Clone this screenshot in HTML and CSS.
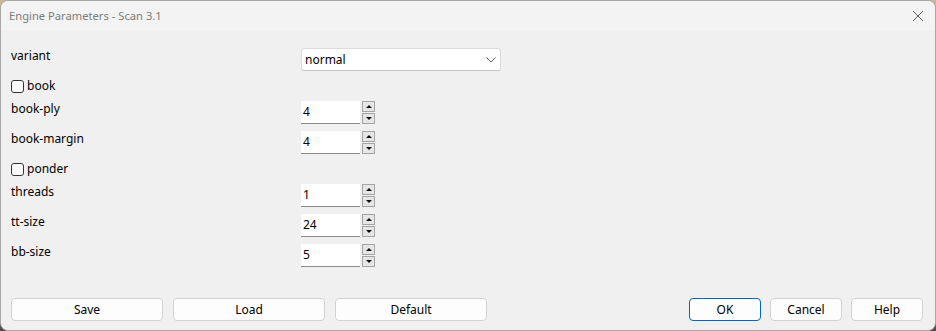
FILE: index.html
```html
<!DOCTYPE html>
<html>
<head>
<meta charset="utf-8">
<link rel="stylesheet" href="styles.css">
</head>
<body>
<div class="window">
  <div class="titlebar">
    <span class="title">Engine Parameters - Scan 3.1</span>
    <svg class="close" width="12" height="12" viewBox="0 0 12 12"><path d="M1 1 L11 11 M11 1 L1 11" stroke="#5a5a5a" stroke-width="1" fill="none"/></svg>
  </div>
  <div class="content">
    <div class="form">
      <div class="row">
        <span class="lbl">variant</span>
        <div class="select"><span>normal</span>
          <svg class="chev" width="10" height="6" viewBox="0 0 10 6"><path d="M0.5 0.5 L5 5 L9.5 0.5" stroke="#606060" stroke-width="1" fill="none"/></svg>
        </div>
      </div>
      <div class="row check"><span class="box"></span><span>book</span></div>
      <div class="row">
        <span class="lbl">book-ply</span>
        <div class="spin"><div class="field">4</div><div class="arrows"><div class="arr"><i class="up"></i></div><div class="arr"><i class="down"></i></div></div></div>
      </div>
      <div class="row">
        <span class="lbl">book-margin</span>
        <div class="spin"><div class="field">4</div><div class="arrows"><div class="arr"><i class="up"></i></div><div class="arr"><i class="down"></i></div></div></div>
      </div>
      <div class="row check"><span class="box"></span><span>ponder</span></div>
      <div class="row">
        <span class="lbl">threads</span>
        <div class="spin"><div class="field">1</div><div class="arrows"><div class="arr"><i class="up"></i></div><div class="arr"><i class="down"></i></div></div></div>
      </div>
      <div class="row">
        <span class="lbl">tt-size</span>
        <div class="spin"><div class="field">24</div><div class="arrows"><div class="arr"><i class="up"></i></div><div class="arr"><i class="down"></i></div></div></div>
      </div>
      <div class="row">
        <span class="lbl">bb-size</span>
        <div class="spin"><div class="field">5</div><div class="arrows"><div class="arr"><i class="up"></i></div><div class="arr"><i class="down"></i></div></div></div>
      </div>
    </div>
    <div class="buttons">
      <div class="group wide">
        <div class="btn">Save</div>
        <div class="btn">Load</div>
        <div class="btn">Default</div>
      </div>
      <div class="group narrow">
        <div class="btn default">OK</div>
        <div class="btn">Cancel</div>
        <div class="btn">Help</div>
      </div>
    </div>
  </div>
</div>
</body>
</html>
```
FILE: styles.css
```css
html, body {
  margin: 0;
  padding: 0;
}
body {
  width: 936px;
  height: 331px;
  background: linear-gradient(180deg, #c9b796 0%, #8a7a66 45%, #4d4d4d 100%);
  font-family: "Noto Sans", "Open Sans", sans-serif;
  font-size: 12px;
  line-height: 16px;
  color: #000;
  overflow: hidden;
}
.window {
  box-sizing: border-box;
  width: 936px;
  height: 331px;
  border: 1px solid #a8a8a8;
  border-radius: 8px;
  background: #f0f0f0;
  display: flex;
  flex-direction: column;
  overflow: hidden;
}
.titlebar {
  height: 30px;
  flex: none;
  background: #f3f3f3;
  display: flex;
  align-items: center;
  justify-content: space-between;
  padding: 0 11px 0 8px;
}
.title {
  color: #7c7c7c;
  font-size: 11.2px;
}
.close {
  display: block;
}
.content {
  flex: 1;
  display: flex;
  flex-direction: column;
  padding: 17px 12px 9px 10px;
}
.form {
  display: flex;
  flex-direction: column;
  gap: 7px;
}
.row {
  display: flex;
  align-items: flex-start;
}
.lbl {
  width: 290px;
  flex: none;
  margin-top: 0;
}
.select {
  box-sizing: border-box;
  width: 200px;
  height: 23px;
  background: #fff;
  border: 1px solid #dcdcdc;
  border-bottom-color: #c4c4c4;
  border-radius: 3px;
  display: flex;
  align-items: center;
  justify-content: space-between;
  padding: 0 4px 0 3px;
}
.chev {
  display: block;
}
.row.check {
  height: 16px;
  align-items: center;
}
.box {
  box-sizing: border-box;
  width: 13px;
  height: 13px;
  border: 1px solid #333;
  border-radius: 3px;
  background: #fff;
  margin-right: 3px;
}
.spin {
  display: flex;
  align-items: flex-start;
}
.field {
  box-sizing: border-box;
  width: 59px;
  height: 23px;
  background: #fff;
  border-bottom: 1px solid #8a8a8a;
  padding: 3px 0 0 2px;
}
.arrows {
  margin-left: 2px;
  display: flex;
  flex-direction: column;
  gap: 1px;
}
.arr {
  box-sizing: border-box;
  width: 13px;
  height: 11px;
  border: 1px solid #a4a4a4;
  background: #e6e6e6;
  display: flex;
  align-items: center;
  justify-content: center;
}
.arr i {
  width: 0;
  height: 0;
  border-left: 3px solid transparent;
  border-right: 3px solid transparent;
}
.arr i.up {
  border-bottom: 3px solid #111;
}
.arr i.down {
  border-top: 3px solid #111;
}
.buttons {
  margin-top: auto;
  display: flex;
  justify-content: space-between;
}
.group {
  display: flex;
}
.group.wide {
  gap: 10px;
}
.group.wide .btn {
  width: 152px;
}
.group.narrow {
  gap: 9px;
}
.group.narrow .btn {
  width: 72px;
}
.btn {
  box-sizing: border-box;
  height: 23px;
  border: 1px solid #d3d3d3;
  border-radius: 4px;
  background: #fdfdfd;
  display: flex;
  align-items: center;
  justify-content: center;
}
.btn.default {
  border-color: #0067c0;
}
```
